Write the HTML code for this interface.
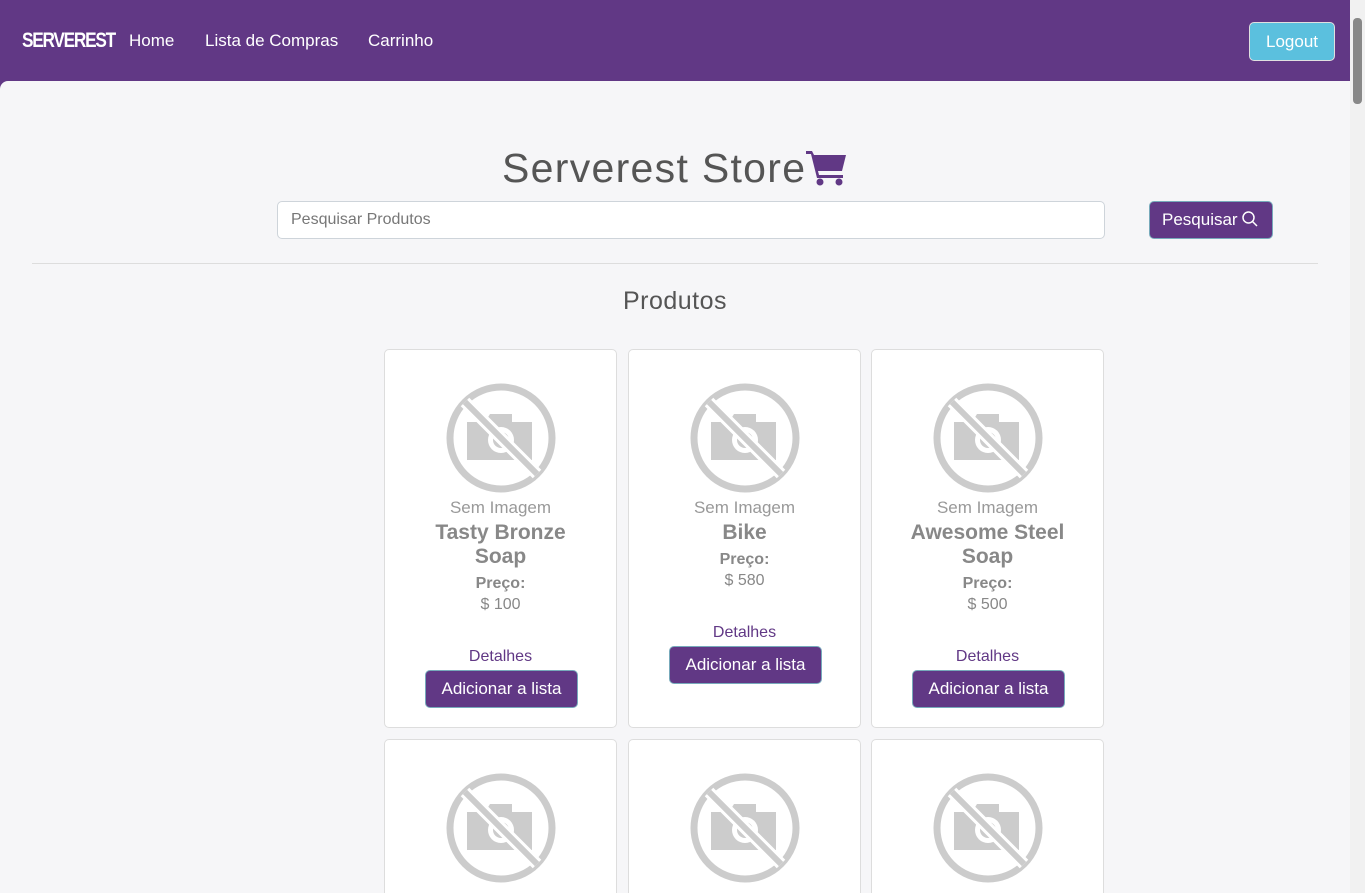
<!DOCTYPE html>
<html><head><meta charset="utf-8"><style>
*{box-sizing:border-box;margin:0;padding:0}
html,body{width:1365px;height:893px;overflow:hidden;background:#f6f6f8;font-family:"Liberation Sans",sans-serif}
#wrap{position:relative;width:1365px;height:893px;overflow:hidden;background:#613885}
.hdr{position:absolute;left:0;top:0;width:1350px;height:81px;background:#613885;color:#fff}
.logo{position:absolute;left:22px;top:29px;font-weight:bold;font-size:21px;letter-spacing:-1.5px;font-family:"Liberation Sans Narrow","Liberation Sans",sans-serif;transform:scaleX(.82);transform-origin:left}
.nav{position:absolute;top:31px;font-size:17px}
.logout{position:absolute;left:1249px;top:22px;width:86px;height:39px;background:#5bc0de;border:1px solid #e0e0e0;border-radius:5px;color:#fff;font-size:17px;text-align:center;line-height:37px}
.main{position:absolute;left:0;top:81px;width:1350px;height:812px;background:#f6f6f8;border-top-left-radius:8px}
.sb{position:absolute;left:1350px;top:0;width:15px;height:893px;background:#f1f1f1}
.sb div{position:absolute;left:3px;top:18px;width:9px;height:86px;background:#888;border-radius:4px}
h1{position:absolute;left:502px;top:64px;font-size:41px;letter-spacing:1.3px;font-weight:normal;color:#555;white-space:nowrap}
.search{position:absolute;left:277px;top:120px;width:828px;height:38px;background:#fff;border:1px solid #ced4da;border-radius:5px;color:#777;font-size:16px;padding:9px 13px}
.pbtn{position:absolute;left:1149px;top:120px;width:124px;height:38px;background:#613885;border:1px solid #7ab;border-radius:5px;color:#fff;font-size:17px;line-height:36px;padding-left:12px;white-space:nowrap}
.hr{position:absolute;left:32px;top:182px;width:1286px;height:1px;background:#ddd}
h2{position:absolute;left:0;width:1350px;top:206px;text-align:center;font-size:25px;letter-spacing:.5px;font-weight:normal;color:#555}
.card{position:absolute;width:233px;height:379px;background:#fff;border:1px solid #ddd;border-radius:5px;text-align:center;color:#888;overflow:hidden}
.card svg{position:absolute;left:60px;top:32px}
.si{position:absolute;top:148px;width:100%;font-size:17px;color:#999}
.nm{position:absolute;top:171px;left:36px;right:36px;font-size:21px;font-weight:bold;line-height:24px;color:#888}
.pr{font-size:16px;font-weight:bold;color:#888}
.pv{font-size:16px;font-weight:normal;color:#888}
.det{position:absolute;width:100%;font-size:16px;color:#613885}
.add{position:absolute;left:40px;width:153px;height:38px;background:#613885;border:1px solid #7ab;border-radius:5px;color:#fff;font-size:17px;line-height:36px;white-space:nowrap}
.r2{height:154px;border-bottom:none;border-radius:5px 5px 0 0}
</style></head><body><div id="wrap">
<div class="hdr">
<div class="logo">SERVEREST</div>
<div class="nav" style="left:129px">Home</div>
<div class="nav" style="left:205px">Lista de Compras</div>
<div class="nav" style="left:368px">Carrinho</div>
<div class="logout">Logout</div>
</div>
<div class="main">
<h1>Serverest Store<svg width="42" height="38" viewBox="0 0 42 38" style="vertical-align:-4px"><path d="M0 3h6l2 4h32l-4 16H12l1 4h24v3H11L5 6H0z" fill="#613885"/><circle cx="14" cy="34" r="3.5" fill="#613885"/><circle cx="33" cy="34" r="3.5" fill="#613885"/></svg></h1>
<div class="search">Pesquisar Produtos</div>
<div class="pbtn">Pesquisar <svg width="16" height="16" viewBox="0 0 16 16" style="vertical-align:-2px"><circle cx="6.5" cy="6.5" r="5.5" fill="none" stroke="#fff" stroke-width="1.5"/><path d="M10.5 10.5L15 15" stroke="#fff" stroke-width="1.5"/></svg></div>
<div class="hr"></div>
<h2>Produtos</h2>
</div>
<div class="sb"><div></div></div>
<div class="card" style="left:384px;top:349px"><svg width="112" height="112" viewBox="0 0 112 112"><circle cx="56" cy="56" r="51" fill="none" stroke="#ccc" stroke-width="7"/><path d="M22 40h18l5-8h22v8h20v38H22z" fill="#ccc"/><circle cx="56" cy="58" r="13" fill="#fff"/><circle cx="56" cy="58" r="8" fill="#ccc"/><path d="M20 20L92 92" stroke="#fff" stroke-width="12"/><path d="M20 20L92 92" stroke="#ccc" stroke-width="6"/></svg><div class="si">Sem Imagem</div><div class="nm">Tasty Bronze Soap<div class="pr" style="margin-top:4px;line-height:22px">Preço:</div><div class="pv" style="line-height:20px">$ 100</div></div><div class="det" style="top:298px">Detalhes</div><div class="add" style="top:320px">Adicionar a lista</div></div>
<div class="card" style="left:628px;top:349px"><svg width="112" height="112" viewBox="0 0 112 112"><circle cx="56" cy="56" r="51" fill="none" stroke="#ccc" stroke-width="7"/><path d="M22 40h18l5-8h22v8h20v38H22z" fill="#ccc"/><circle cx="56" cy="58" r="13" fill="#fff"/><circle cx="56" cy="58" r="8" fill="#ccc"/><path d="M20 20L92 92" stroke="#fff" stroke-width="12"/><path d="M20 20L92 92" stroke="#ccc" stroke-width="6"/></svg><div class="si">Sem Imagem</div><div class="nm">Bike<div class="pr" style="margin-top:4px;line-height:22px">Preço:</div><div class="pv" style="line-height:20px">$ 580</div></div><div class="det" style="top:274px">Detalhes</div><div class="add" style="top:296px">Adicionar a lista</div></div>
<div class="card" style="left:871px;top:349px"><svg width="112" height="112" viewBox="0 0 112 112"><circle cx="56" cy="56" r="51" fill="none" stroke="#ccc" stroke-width="7"/><path d="M22 40h18l5-8h22v8h20v38H22z" fill="#ccc"/><circle cx="56" cy="58" r="13" fill="#fff"/><circle cx="56" cy="58" r="8" fill="#ccc"/><path d="M20 20L92 92" stroke="#fff" stroke-width="12"/><path d="M20 20L92 92" stroke="#ccc" stroke-width="6"/></svg><div class="si">Sem Imagem</div><div class="nm">Awesome Steel Soap<div class="pr" style="margin-top:4px;line-height:22px">Preço:</div><div class="pv" style="line-height:20px">$ 500</div></div><div class="det" style="top:298px">Detalhes</div><div class="add" style="top:320px">Adicionar a lista</div></div>
<div class="card r2" style="left:384px;top:739px"><svg width="112" height="112" viewBox="0 0 112 112"><circle cx="56" cy="56" r="51" fill="none" stroke="#ccc" stroke-width="7"/><path d="M22 40h18l5-8h22v8h20v38H22z" fill="#ccc"/><circle cx="56" cy="58" r="13" fill="#fff"/><circle cx="56" cy="58" r="8" fill="#ccc"/><path d="M20 20L92 92" stroke="#fff" stroke-width="12"/><path d="M20 20L92 92" stroke="#ccc" stroke-width="6"/></svg></div>
<div class="card r2" style="left:628px;top:739px"><svg width="112" height="112" viewBox="0 0 112 112"><circle cx="56" cy="56" r="51" fill="none" stroke="#ccc" stroke-width="7"/><path d="M22 40h18l5-8h22v8h20v38H22z" fill="#ccc"/><circle cx="56" cy="58" r="13" fill="#fff"/><circle cx="56" cy="58" r="8" fill="#ccc"/><path d="M20 20L92 92" stroke="#fff" stroke-width="12"/><path d="M20 20L92 92" stroke="#ccc" stroke-width="6"/></svg></div>
<div class="card r2" style="left:871px;top:739px"><svg width="112" height="112" viewBox="0 0 112 112"><circle cx="56" cy="56" r="51" fill="none" stroke="#ccc" stroke-width="7"/><path d="M22 40h18l5-8h22v8h20v38H22z" fill="#ccc"/><circle cx="56" cy="58" r="13" fill="#fff"/><circle cx="56" cy="58" r="8" fill="#ccc"/><path d="M20 20L92 92" stroke="#fff" stroke-width="12"/><path d="M20 20L92 92" stroke="#ccc" stroke-width="6"/></svg></div>
</div></body></html>
